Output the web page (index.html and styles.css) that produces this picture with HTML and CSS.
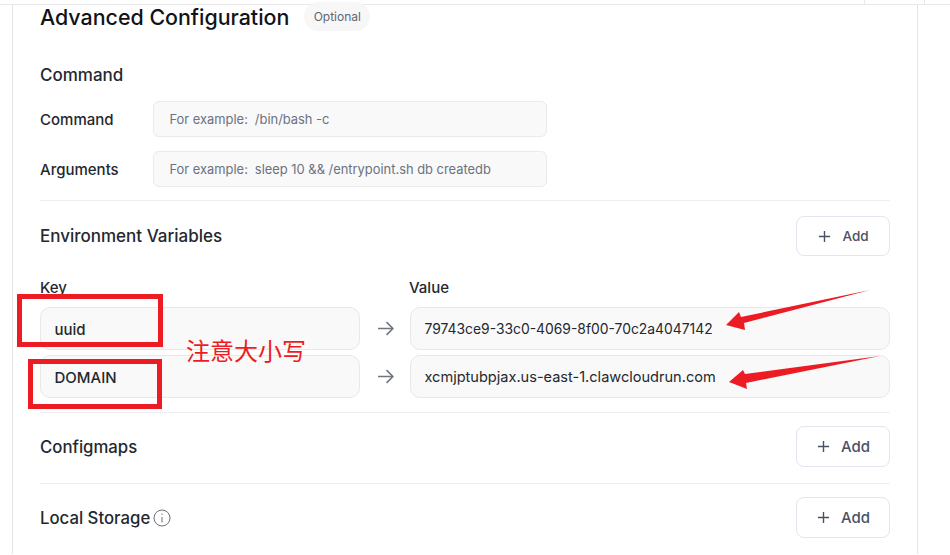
FILE: index.html
```html
<!DOCTYPE html>
<html lang="en">
<head>
<meta charset="utf-8">
<title>Advanced Configuration</title>
<link rel="stylesheet" href="styles.css">
</head>
<body>
<div class="topbar"><span class="tick tick-a"></span><span class="tick tick-b"></span></div>
<main class="card">
  <header class="title-row">
    <h1 class="title">Advanced Configuration</h1>
    <span class="badge">Optional</span>
  </header>
  <section class="command">
    <h2 class="heading">Command</h2>
    <div class="form-row">
      <label class="form-label">Command</label>
      <div class="field"><span class="prefix">For example:</span><span>/bin/bash -c</span></div>
    </div>
    <div class="form-row">
      <label class="form-label">Arguments</label>
      <div class="field"><span class="prefix">For example:</span><span>sleep 10 &amp;&amp; /entrypoint.sh db createdb</span></div>
    </div>
  </section>
  <section class="env">
    <div class="section-head">
      <h2 class="heading">Environment Variables</h2>
      <button class="add add-small"><svg class="plus" viewBox="0 0 14 14"><path d="M7 1v12M1 7h12"/></svg>Add</button>
    </div>
    <div class="kv-labels"><span class="kv-key">Key</span><span class="kv-value">Value</span></div>
    <div class="kv-row">
      <div class="kv-input kv-left strong">uuid</div>
      <svg class="arrow" viewBox="0 0 16 16"><path d="M1 8h14M9 2l6 6-6 6"/></svg>
      <div class="kv-input kv-right">79743ce9-33c0-4069-8f00-70c2a4047142</div>
    </div>
    <div class="kv-row">
      <div class="kv-input kv-left strong">DOMAIN</div>
      <svg class="arrow" viewBox="0 0 16 16"><path d="M1 8h14M9 2l6 6-6 6"/></svg>
      <div class="kv-input kv-right kv-host">xcmjptubpjax.us-east-1.clawcloudrun.com</div>
    </div>
  </section>
  <section class="simple">
    <h2 class="heading">Configmaps</h2>
    <button class="add"><svg class="plus" viewBox="0 0 14 14"><path d="M7 1v12M1 7h12"/></svg>Add</button>
  </section>
  <section class="simple simple-last">
    <h2 class="heading">Local Storage<svg class="info" viewBox="0 0 18 18"><circle cx="9" cy="9" r="8"/><path d="M9 8v5.5M9 4.6v1.4"/></svg></h2>
    <button class="add"><svg class="plus" viewBox="0 0 14 14"><path d="M7 1v12M1 7h12"/></svg>Add</button>
  </section>
</main>
<svg class="markup" viewBox="0 0 950 555" aria-hidden="true">
  <rect class="box" x="19.5" y="296.5" width="141" height="48"/>
  <rect class="box" x="30.5" y="361.5" width="129" height="45"/>
  <polygon class="pointer" points="726,325 739,312 741,317 870,290 744,323 745,330"/>
  <polygon class="pointer" points="729,382 743,370 745,374 880,356 746,383 747,389"/>
</svg>
<div class="note">注意大小写</div>
</body>
</html>
```
FILE: styles.css
```css
* { box-sizing: border-box; }
html, body { margin: 0; padding: 0; height: 555px; overflow: hidden; background: #fff; }
body { position: relative; font-family: Inter, "Noto Sans", sans-serif; color: #24282f; }
.topbar { height: 5px; border-bottom: 1px solid #e8e8ea; position: relative; }
.tick { position: absolute; top: 0; width: 1px; height: 4px; background: #e8e8ea; }
.tick-a { left: 864px; }
.tick-b { left: 924px; }
.card { margin-left: 12px; width: 906px; height: 550px; border-left: 1px solid #e4e4e7; border-right: 1px solid #e4e4e7; padding: 0 27px; }
.title-row { display: flex; align-items: center; height: 26px; margin-top: -1px; }
.title { margin: 0; font-size: 21.4px; font-weight: 500; color: #111318; line-height: 26px; }
.badge { margin-left: 15px; width: 66px; height: 29px; border-radius: 15px; background: #f7f7f8; color: #5f6570; font-size: 12px; display: flex; align-items: center; justify-content: center; position: relative; top: -1px; }
.heading { margin: 0; font-size: 17px; font-weight: 500; color: #24282f; line-height: 20px; display: flex; align-items: center; }
.command { padding-top: 35px; padding-bottom: 13px; border-bottom: 1px solid #eeeef0; }
.form-row { display: flex; align-items: center; height: 36px; margin-top: 14px; }
.command .heading + .form-row { margin-top: 16px; }
.form-label { width: 113px; font-size: 15px; font-weight: 500; color: #24282f; }
.field { width: 394px; height: 36px; border: 1px solid #eaeaec; border-radius: 6px; background: #f9f9fa; padding-left: 15.5px; display: flex; align-items: center; gap: 7px; font-size: 12.9px; color: #6b7280; }
.env { border-bottom: 1px solid #eeeef0; padding-bottom: 14px; }
.section-head { display: flex; justify-content: space-between; align-items: center; padding-top: 15px; }
.add { width: 94px; height: 41px; border: 1px solid #e3e5ee; border-radius: 8px; background: #fff; color: #4a5165; font-family: inherit; font-size: 15px; font-weight: 500; display: flex; align-items: center; justify-content: center; gap: 11px; padding: 0 0 0 1px; }
.add-small { font-size: 13.5px; height: 40px; }
.plus { width: 13px; height: 13px; fill: none; stroke: #4a5165; stroke-width: 1.5; }
.kv-labels { display: flex; font-size: 15px; font-weight: 500; margin-top: 22px; height: 19px; line-height: 19px; }
.kv-key { width: 369px; }
.kv-row { display: flex; align-items: center; margin-bottom: 5px; height: 43px; }
.kv-labels + .kv-row { margin-top: 10px; }
.kv-row:last-child { margin-bottom: 0; }
.kv-input { height: 43px; border: 1px solid #e8e8ea; border-radius: 10px; background: #f9f9f9; display: flex; align-items: center; padding-left: 13.5px; padding-top: 1px; font-size: 13.87px; color: #24282f; }
.kv-left { width: 320px; }
.kv-right { width: 480px; }
.kv-host { font-size: 14.55px; }
.strong { font-weight: 500; font-size: 15px; }
.arrow { width: 17px; height: 17px; margin: 0 16.5px; fill: none; stroke: #71757f; stroke-width: 1.5; }
.simple { display: flex; justify-content: space-between; align-items: flex-start; height: 71px; padding-top: 13px; border-bottom: 1px solid #eeeef0; }
.simple .heading { height: 41px; font-size: 16.75px; }
.simple-last { border-bottom: 0; padding-top: 13px; }
.info { width: 18px; height: 18px; margin-left: 3px; fill: none; stroke: #6b7078; stroke-width: 1; }
.markup { position: absolute; left: 0; top: 0; width: 950px; height: 555px; pointer-events: none; }
.box { fill: none; stroke: #ed1c24; stroke-width: 5; }
.pointer { fill: #ed1c24; }
.note { position: absolute; left: 186px; top: 333px; font-family: "Noto Sans CJK SC", sans-serif; font-size: 24px; line-height: 34px; color: #ed1c24; }
```
